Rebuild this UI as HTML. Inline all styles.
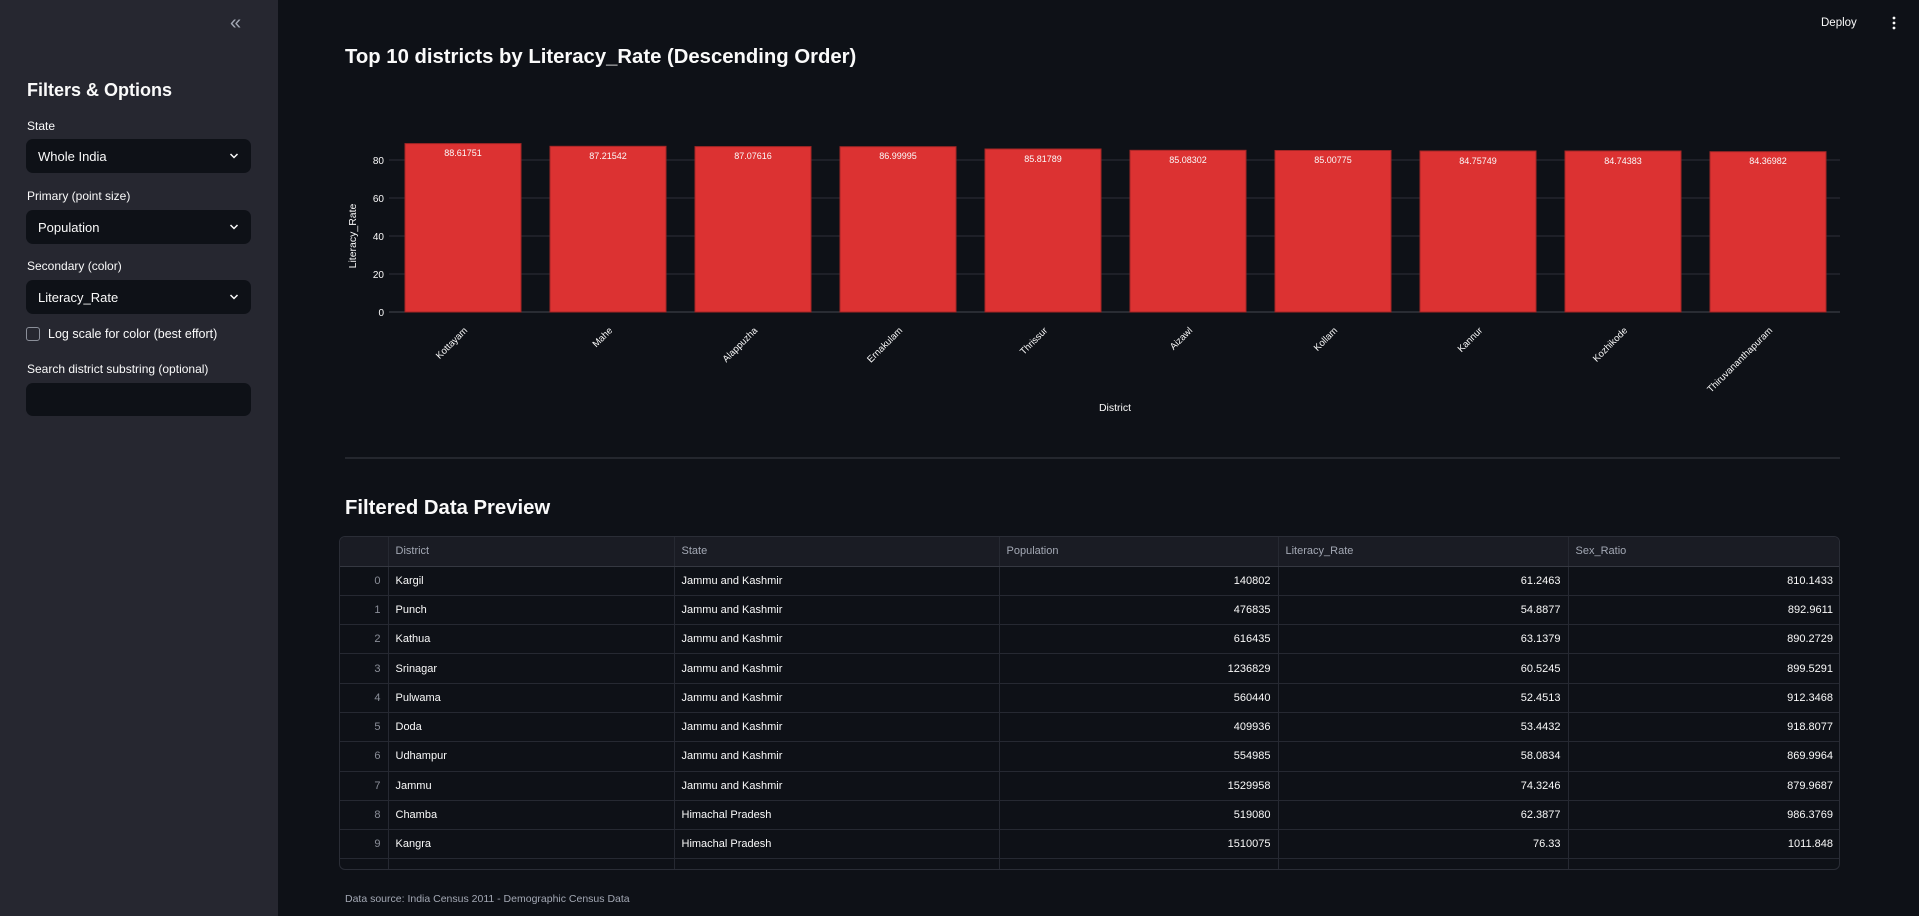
<!DOCTYPE html>
<html><head><meta charset="utf-8"><style>
*{margin:0;padding:0;box-sizing:border-box}
body{width:1919px;height:916px;background:#0e1117;font-family:"Liberation Sans",sans-serif;color:#fafafa;position:relative;overflow:hidden}
.sb{position:absolute;left:0;top:0;width:278px;height:916px;background:#262730}
.a{position:absolute;white-space:nowrap}
.lbl{font-size:12px;color:#fafafa}
.sel{position:absolute;left:26px;width:225px;height:34px;background:#0e1117;border-radius:7px;font-size:13px;padding:10px 12px}
.sel svg{position:absolute;right:12px;top:13px}
table{border-collapse:collapse;font-size:11px}
.tbl{position:absolute;left:339px;top:536px;width:1501px;height:334px;border:1px solid #2a2d36;border-radius:6px;overflow:hidden}
td{border-right:1px solid #262932;border-bottom:1px solid #262932;height:29.3px;padding:0 7px;color:#fafafa}
th{border-right:1px solid #262932;border-bottom:1px solid #353841;height:29px;padding:0 7px;text-align:left;font-weight:normal;color:#a3a8b4;background:#1a1c24}
td.n{text-align:right}
td.i{text-align:right;color:#8b8f99}
</style></head><body>
<div class="sb">
<div class="a" style="left:230px;top:12px;font-size:20px;color:#a3a8b4">«</div>
<div class="a" style="left:27px;top:80px;font-size:18px;font-weight:bold">Filters &amp; Options</div>
<div class="a lbl" style="left:27px;top:119px">State</div>
<div class="sel" style="top:139px">Whole India<svg width="10" height="8"><path d="M1.5 2l3.5 3.5 3.5-3.5" stroke="#fafafa" stroke-width="1.5" fill="none"/></svg></div>
<div class="a lbl" style="left:27px;top:189px">Primary (point size)</div>
<div class="sel" style="top:210px">Population<svg width="10" height="8"><path d="M1.5 2l3.5 3.5 3.5-3.5" stroke="#fafafa" stroke-width="1.5" fill="none"/></svg></div>
<div class="a lbl" style="left:27px;top:259px">Secondary (color)</div>
<div class="sel" style="top:280px">Literacy_Rate<svg width="10" height="8"><path d="M1.5 2l3.5 3.5 3.5-3.5" stroke="#fafafa" stroke-width="1.5" fill="none"/></svg></div>
<div class="a" style="left:26px;top:327px;width:14px;height:14px;border:1px solid #8b8f99;border-radius:3px"></div>
<div class="a" style="left:48px;top:327px;font-size:12.5px">Log scale for color (best effort)</div>
<div class="a lbl" style="left:27px;top:362px">Search district substring (optional)</div>
<div class="sel" style="top:383px;height:33px"></div>
</div>
<div class="a" style="left:1821px;top:17px;font-size:11.5px">Deploy</div>
<svg class="a" style="left:1890px;top:15px" width="8" height="16"><circle cx="4" cy="3" r="1.4" fill="#fafafa"/><circle cx="4" cy="8" r="1.4" fill="#fafafa"/><circle cx="4" cy="13" r="1.4" fill="#fafafa"/></svg>
<div class="a" style="left:345px;top:46px;font-size:20.3px;font-weight:bold">Top 10 districts by Literacy_Rate (Descending Order)</div>
<svg class="a" style="left:0;top:0" width="1919" height="470" font-family="Liberation Sans,sans-serif">
<g stroke="#2d3039" stroke-width="1"><line x1="389" x2="1840" y1="160" y2="160"/><line x1="389" x2="1840" y1="198" y2="198"/><line x1="389" x2="1840" y1="236" y2="236"/><line x1="389" x2="1840" y1="274" y2="274"/><line x1="389" x2="1840" y1="312" y2="312" stroke="#44474f"/></g>
<g font-size="10" fill="#fafafa" text-anchor="end"><text x="384" y="316">0</text><text x="384" y="278">20</text><text x="384" y="240">40</text><text x="384" y="202">60</text><text x="384" y="164">80</text></g>
<text transform="translate(356,236) rotate(-90)" font-size="10.5" fill="#fafafa" text-anchor="middle">Literacy_Rate</text>
<g fill="#dc3232" stroke="#a52626" stroke-width="1">
<rect x="405" y="143.6" width="116" height="168.4"/><rect x="550" y="146.3" width="116" height="165.7"/><rect x="695" y="146.6" width="116" height="165.4"/><rect x="840" y="146.7" width="116" height="165.3"/><rect x="985" y="149" width="116" height="163"/><rect x="1130" y="150.3" width="116" height="161.7"/><rect x="1275" y="150.5" width="116" height="161.5"/><rect x="1420" y="151" width="116" height="161"/><rect x="1565" y="151" width="116" height="161"/><rect x="1710" y="151.7" width="116" height="160.3"/></g>
<g font-size="9" fill="#fafafa" text-anchor="middle"><text x="463" y="156">88.61751</text><text x="608" y="159">87.21542</text><text x="753" y="159">87.07616</text><text x="898" y="159">86.99995</text><text x="1043" y="162">85.81789</text><text x="1188" y="163">85.08302</text><text x="1333" y="163">85.00775</text><text x="1478" y="164">84.75749</text><text x="1623" y="164">84.74383</text><text x="1768" y="164">84.36982</text></g>
<g font-size="9.5" fill="#fafafa" text-anchor="end">
<text transform="translate(468,331) rotate(-45)">Kottayam</text><text transform="translate(613,331) rotate(-45)">Mahe</text><text transform="translate(758,331) rotate(-45)">Alappuzha</text><text transform="translate(903,331) rotate(-45)">Ernakulam</text><text transform="translate(1048,331) rotate(-45)">Thrissur</text><text transform="translate(1193,331) rotate(-45)">Aizawl</text><text transform="translate(1338,331) rotate(-45)">Kollam</text><text transform="translate(1483,331) rotate(-45)">Kannur</text><text transform="translate(1628,331) rotate(-45)">Kozhikode</text><text transform="translate(1773,331) rotate(-45)">Thiruvananthapuram</text></g>
<text x="1115" y="411" font-size="10.5" fill="#fafafa" text-anchor="middle">District</text>
<line x1="345" x2="1840" y1="458" y2="458" stroke="#3a3d46"/>
</svg>
<div class="a" style="left:345px;top:497px;font-size:20.3px;font-weight:bold">Filtered Data Preview</div>
<div class="tbl"><table style="width:1501px">
<tr><th style="width:48px"></th><th style="width:286px">District</th><th style="width:325px">State</th><th style="width:279px">Population</th><th style="width:290px">Literacy_Rate</th><th style="border-right:none">Sex_Ratio</th></tr>
<tr><td class="i">0</td><td>Kargil</td><td>Jammu and Kashmir</td><td class="n">140802</td><td class="n">61.2463</td><td class="n">810.1433</td></tr>
<tr><td class="i">1</td><td>Punch</td><td>Jammu and Kashmir</td><td class="n">476835</td><td class="n">54.8877</td><td class="n">892.9611</td></tr>
<tr><td class="i">2</td><td>Kathua</td><td>Jammu and Kashmir</td><td class="n">616435</td><td class="n">63.1379</td><td class="n">890.2729</td></tr>
<tr><td class="i">3</td><td>Srinagar</td><td>Jammu and Kashmir</td><td class="n">1236829</td><td class="n">60.5245</td><td class="n">899.5291</td></tr>
<tr><td class="i">4</td><td>Pulwama</td><td>Jammu and Kashmir</td><td class="n">560440</td><td class="n">52.4513</td><td class="n">912.3468</td></tr>
<tr><td class="i">5</td><td>Doda</td><td>Jammu and Kashmir</td><td class="n">409936</td><td class="n">53.4432</td><td class="n">918.8077</td></tr>
<tr><td class="i">6</td><td>Udhampur</td><td>Jammu and Kashmir</td><td class="n">554985</td><td class="n">58.0834</td><td class="n">869.9964</td></tr>
<tr><td class="i">7</td><td>Jammu</td><td>Jammu and Kashmir</td><td class="n">1529958</td><td class="n">74.3246</td><td class="n">879.9687</td></tr>
<tr><td class="i">8</td><td>Chamba</td><td>Himachal Pradesh</td><td class="n">519080</td><td class="n">62.3877</td><td class="n">986.3769</td></tr>
<tr><td class="i">9</td><td>Kangra</td><td>Himachal Pradesh</td><td class="n">1510075</td><td class="n">76.33</td><td class="n">1011.848</td></tr>
<tr><td></td><td></td><td></td><td></td><td></td><td></td></tr>
</table></div>
<div class="a" style="left:345px;top:893px;font-size:10.5px;color:#a3a8b4">Data source: India Census 2011 - Demographic Census Data</div>
</body></html>
